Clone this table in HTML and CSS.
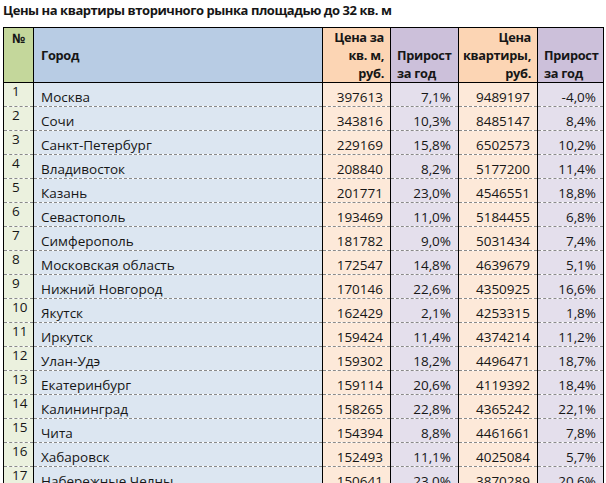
FILE: index.html
```html
<!DOCTYPE html>
<html lang="ru">
<head>
<meta charset="utf-8">
<link rel="stylesheet" href="styles.css">
</head>
<body>
<div class="page">
  <h1 class="title">Цены на квартиры вторичного рынка площадью до 32 кв. м</h1>
  <table class="grid">
    <colgroup>
      <col class="w-num"><col class="w-city"><col class="w-price"><col class="w-growth"><col class="w-price2"><col class="w-growth2">
    </colgroup>
    <thead>
      <tr>
        <th class="num">№</th>
        <th class="city">Город</th>
        <th class="price">Цена за<br>кв. м,<br>руб.</th>
        <th class="growth">Прирост<br>за год</th>
        <th class="price">Цена<br>квартиры,<br>руб.</th>
        <th class="growth">Прирост<br>за год</th>
      </tr>
    </thead>
    <tbody>
      <tr><td class="num">1</td><td class="city">Москва</td><td class="price">397613</td><td class="growth">7,1%</td><td class="price">9489197</td><td class="growth">-4,0%</td></tr>
      <tr><td class="num">2</td><td class="city">Сочи</td><td class="price">343816</td><td class="growth">10,3%</td><td class="price">8485147</td><td class="growth">8,4%</td></tr>
      <tr><td class="num">3</td><td class="city">Санкт-Петербург</td><td class="price">229169</td><td class="growth">15,8%</td><td class="price">6502573</td><td class="growth">10,2%</td></tr>
      <tr><td class="num">4</td><td class="city">Владивосток</td><td class="price">208840</td><td class="growth">8,2%</td><td class="price">5177200</td><td class="growth">11,4%</td></tr>
      <tr><td class="num">5</td><td class="city">Казань</td><td class="price">201771</td><td class="growth">23,0%</td><td class="price">4546551</td><td class="growth">18,8%</td></tr>
      <tr><td class="num">6</td><td class="city">Севастополь</td><td class="price">193469</td><td class="growth">11,0%</td><td class="price">5184455</td><td class="growth">6,8%</td></tr>
      <tr><td class="num">7</td><td class="city">Симферополь</td><td class="price">181782</td><td class="growth">9,0%</td><td class="price">5031434</td><td class="growth">7,4%</td></tr>
      <tr><td class="num">8</td><td class="city">Московская область</td><td class="price">172547</td><td class="growth">14,8%</td><td class="price">4639679</td><td class="growth">5,1%</td></tr>
      <tr><td class="num">9</td><td class="city">Нижний Новгород</td><td class="price">170146</td><td class="growth">22,6%</td><td class="price">4350925</td><td class="growth">16,6%</td></tr>
      <tr><td class="num">10</td><td class="city">Якутск</td><td class="price">162429</td><td class="growth">2,1%</td><td class="price">4253315</td><td class="growth">1,8%</td></tr>
      <tr><td class="num">11</td><td class="city">Иркутск</td><td class="price">159424</td><td class="growth">11,4%</td><td class="price">4374214</td><td class="growth">11,2%</td></tr>
      <tr><td class="num">12</td><td class="city">Улан-Удэ</td><td class="price">159302</td><td class="growth">18,2%</td><td class="price">4496471</td><td class="growth">18,7%</td></tr>
      <tr><td class="num">13</td><td class="city">Екатеринбург</td><td class="price">159114</td><td class="growth">20,6%</td><td class="price">4119392</td><td class="growth">18,4%</td></tr>
      <tr><td class="num">14</td><td class="city">Калининград</td><td class="price">158265</td><td class="growth">22,8%</td><td class="price">4365242</td><td class="growth">22,1%</td></tr>
      <tr><td class="num">15</td><td class="city">Чита</td><td class="price">154394</td><td class="growth">8,8%</td><td class="price">4461661</td><td class="growth">7,8%</td></tr>
      <tr><td class="num">16</td><td class="city">Хабаровск</td><td class="price">152493</td><td class="growth">11,1%</td><td class="price">4025084</td><td class="growth">5,7%</td></tr>
      <tr class="last"><td class="num">17</td><td class="city">Набережные Челны</td><td class="price">150641</td><td class="growth">23,0%</td><td class="price">3870289</td><td class="growth">20,6%</td></tr>
    </tbody>
  </table>
</div>
</body>
</html>
```

FILE: styles.css
```css
html, body {
  margin: 0;
  padding: 0;
  overflow: hidden;
  background: #ffffff;
}

.page {
  padding: 0 3px;
  font-family: "Open Sans", "Noto Sans", "Liberation Sans", sans-serif;
  color: #161616;
}

.title {
  margin: 0;
  padding: 1px 0 0;
  font-size: 13px;
  line-height: 18px;
  font-weight: 700;
  letter-spacing: -0.45px;
  height: 27px;
  box-sizing: border-box;
}

.grid {
  border-collapse: collapse;
  table-layout: fixed;
  width: 600px;
  font-size: 13.5px;
  border: 1px solid #000;
}

.w-num { width: 30px; }
.w-city { width: 289px; }
.w-price { width: 68px; }
.w-growth { width: 68px; }
.w-price2 { width: 79px; }
.w-growth2 { width: 66px; }

.grid th,
.grid td {
  border-left: 1px solid #000;
  border-right: 1px solid #000;
  padding: 0;
  overflow: hidden;
  white-space: nowrap;
}

.grid th {
  height: 53px;
  font-size: 12.8px;
  letter-spacing: -0.3px;
  font-weight: 700;
  line-height: 18px;
  border-bottom: 1px solid #000;
  vertical-align: bottom;
  padding-bottom: 0;
}

.grid td {
  height: 23px;
  line-height: 18px;
  border-bottom: 1px dashed #8a8a8a;
  vertical-align: bottom;
  padding-bottom: 0;
}

.grid th.num {
  background: #c4d79b;
  vertical-align: top;
  text-align: left;
  padding: 1px 0 0 8px;
}

.grid th.city {
  background: #b8cce4;
  vertical-align: middle;
  text-align: left;
  padding: 0 0 0 7px;
}

.grid th.price {
  background: #fcd5b4;
  text-align: right;
  padding-right: 6px;
}

.grid th.growth {
  background: #ccc0da;
  text-align: left;
  padding-left: 6px;
}

.grid td.num {
  background: #ebf1de;
  vertical-align: top;
  line-height: 17px;
  padding: 0 0 0 8px;
}

.grid td.city {
  background: #dce6f1;
  padding-left: 7px;
}

.grid td.price {
  background: #fde9d9;
  text-align: right;
  padding-right: 7px;
}

.grid td.growth {
  background: #e4dfec;
  text-align: right;
  padding-right: 7px;
}
```
